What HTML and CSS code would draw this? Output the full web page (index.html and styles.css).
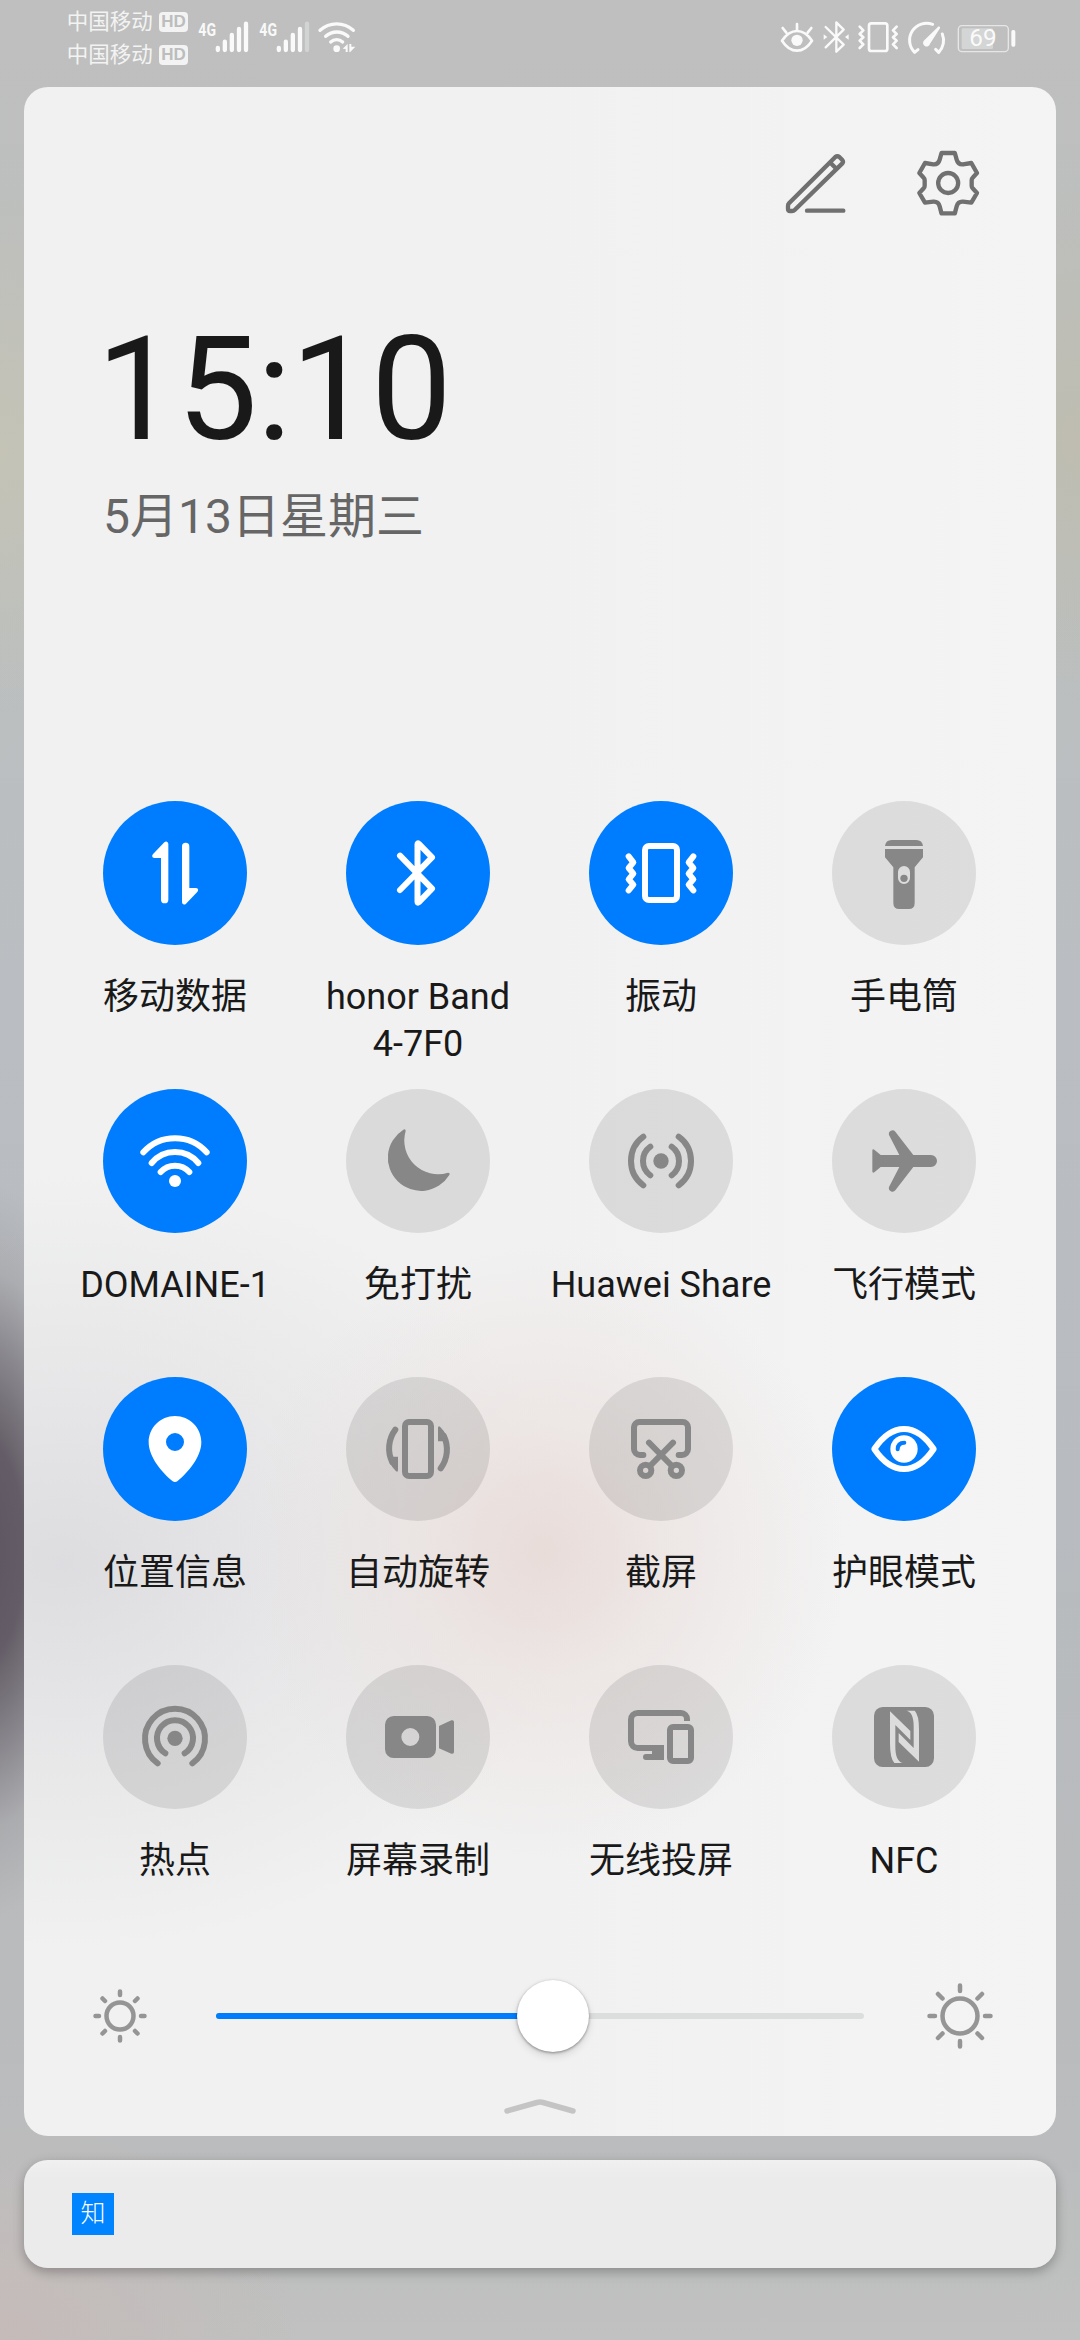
FILE: index.html
```html
<!DOCTYPE html>
<html lang="zh-CN">
<head>
<meta charset="utf-8">
<title>控制中心</title>
<link rel="stylesheet" href="styles.css">
</head>
<body>
<header class="status">
  <div class="carriers">
    <div class="carrier"><span>中国移动</span><b class="hd">HD</b></div>
    <div class="carrier"><span>中国移动</span><b class="hd">HD</b></div>
  </div>
  <svg class="sig" viewBox="435 0 183 261">
    <text class="net" x="445" y="107" textLength="53" lengthAdjust="spacingAndGlyphs">4G</text>
    <g class="bars"><path d="M503.500 144v6M524.500 125v25M545.500 105v45M567 87v63M588 71v79"/></g>
  </svg>
  <svg class="sig" viewBox="618 0 183 261">
    <text class="net" x="628" y="107" textLength="53" lengthAdjust="spacingAndGlyphs">4G</text>
    <g class="bars"><path d="M686.500 144v6M707.500 125v25M728.500 105v45M750 87v63"/><path class="dim" d="M771 71v79"/></g>
  </svg>
  <svg class="wifi" viewBox="801 0 120 261">
    <g class="line w10"><path d="M810 91A74 74 0 0 1 910 91M827 109A50 50 0 0 1 894 109M842 126A27 27 0 0 1 878 126"/></g>
    <circle class="fill" cx="860" cy="146" r="10"/>
    <path class="fill" d="M878 146L893 132V156H887V147ZM898 156V132H904V140H916L900 157Z"/>
  </svg>
  <span class="spacer"></span>
  <svg class="s40" viewBox="55 0 120 261">
    <g class="line w8"><path d="M67 122C80 103 95 93 112 93S144 103 157 122C144 142 129 152 112 152S80 142 67 122Z"/><path d="M112 72V92M69 84L80 98M155 84L144 98"/></g>
    <circle class="fill" cx="112" cy="121" r="17"/>
  </svg>
  <svg class="s36" viewBox="175 0 108 261">
    <path class="line w7" d="M198 81L252 134L230 155V67L252 89L198 142"/>
    <path class="fill" d="M192 103L203 111L192 119ZM267 103L256 111L267 119Z"/>
  </svg>
  <svg class="s49" viewBox="283 0 147 261">
    <g class="line w8"><rect x="328" y="70" width="55" height="83" rx="7"/><path d="M300 80L311 91L300 102L311 112L300 122L311 133L300 144M411 80L400 91L411 102L400 112L411 122L400 133L411 144"/></g>
  </svg>
  <svg class="s47" viewBox="430 0 141 261">
    <path class="line w9" d="M519 73A51 51 0 0 0 465 157L475 149M548 102A51 51 0 0 1 537 157L528 148"/>
    <path class="fill" d="M537 79Q543 80 541 85L511 131A10.500 10.500 0 1 1 494 121Z"/>
  </svg>
  <svg class="s66" viewBox="571 0 198 261">
    <rect class="cell" x="606" y="85" width="94" height="62" rx="4"/>
    <rect class="line w4" x="596" y="77" width="150" height="78" rx="11"/>
    <rect class="fill" x="755" y="90" width="12" height="50" rx="5"/>
    <text class="pct" x="629" y="138">69</text>
  </svg>
</header>

<main class="panel">
  <div class="tools">
    <svg viewBox="72 450 192 198">
      <path d="M226 471Q232 466 238 471L247 480Q251 485 247 490L104 630Q101 633 96 633H90Q84 633 84 627V618Q84 613 87 610ZM211 488L230 507M141 632H250"/>
    </svg>
    <svg viewBox="468 450 192 198">
      <path d="M544.500 459H584.500L590 479Q594 494 609 493L634 489L651 519L638 533Q635 536 635 541V557Q635 562 638 565L651 579L634 608L609 605Q594 604 590 619L584.500 640H544.500L539 619Q535 604 520 605L495 608L478 579L491 565Q494 562 494 557V541Q494 536 491 533L478 519L495 489L520 493Q535 494 539 479Z"/>
      <circle cx="564.500" cy="549" r="30"/>
    </svg>
  </div>
  <div class="time">15:10</div>
  <div class="date">5月13日星期三</div>

  <section class="tiles">
    <div class="tile on"><svg viewBox="0 0 432 432"><g class="solid"><path d="M174 171H154Q148 171 147.500 166Q147 162 151 158L184 124Q188 120 192 122Q196 124 196 129V296a11 11 0 0 1-22 0Z"/><path transform="rotate(180 216.500 216)" d="M174 171H154Q148 171 147.500 166Q147 162 151 158L184 124Q188 120 192 122Q196 124 196 129V296a11 11 0 0 1-22 0Z"/></g></svg><p>移动数据</p></div>
    <div class="tile on"><svg viewBox="0 0 432 432"><path class="stroke" d="M162 164L258 263L218 304Q214.500 307 214.500 302V130Q214.500 125 218 128L258 169L162 267"/></svg><p>honor Band<br>4-7F0</p></div>
    <div class="tile on"><svg viewBox="0 0 432 432"><g class="stroke"><rect x="168" y="135" width="96" height="162" rx="12"/><path d="M119 166L133 184L119 201L133 218L119 235L133 251L119 268M313 166L299 184L313 201L299 218L313 235L299 251L313 268"/></g></svg><p>振动</p></div>
    <div class="tile"><svg viewBox="0 0 432 432"><path class="solid" fill-rule="evenodd" d="M159 135Q161 117 179 117H253Q271 117 273 135ZM159 144H273V169L248 199V306Q248 324 230 324H202Q184 324 184 306V199L159 169ZM216 195a18 18 0 0 0-18 18v18a18 18 0 0 0 36 0v-18a18 18 0 0 0-18-18Z"/><circle class="solid" cx="216" cy="232" r="11"/></svg><p>手电筒</p></div>

    <div class="tile on"><svg viewBox="0 0 432 432"><path class="stroke" d="M121 190A128 128 0 0 1 311 190M146 222A91 91 0 0 1 286 222M173 249A58 58 0 0 1 259 249"/><circle class="solid" cx="216" cy="276" r="18"/></svg><p>DOMAINE-1</p></div>
    <div class="tile"><svg viewBox="0 0 432 432"><path class="solid" d="M172 122Q179 119 179 126A101 101 0 0 0 306 251Q313 251 310 258A99.500 99.500 0 1 1 172 122Z"/></svg><p>免打扰</p></div>
    <div class="tile"><svg viewBox="0 0 432 432"><path class="stroke" d="M184 173A53 53 0 0 0 184 259M163 143A90.500 90.500 0 0 0 163 289M248 173A53 53 0 0 1 248 259M269 143A90.500 90.500 0 0 1 269 289"/><circle class="solid" cx="216" cy="216" r="23"/></svg><p>Huawei Share</p></div>
    <div class="tile"><svg viewBox="0 0 432 432"><path class="solid" d="M146 198H202L171 138A11 11 0 0 1 190 128L244 198H297a18 18 0 0 1 0 36H244L190 304A11 11 0 0 1 171 294L202 234H146L127 250Q121 253 121 247V185Q121 179 127 182Z"/></svg><p>飞行模式</p></div>

    <div class="tile on"><svg viewBox="0 0 432 432"><path class="solid" fill-rule="evenodd" d="M216 117c44 0 79 35 79 79c0 44-40 91-72 117q-7 4-14 0C177 287 137 240 137 196c0-44 35-79 79-79ZM216 168a27 27 0 1 0 0 54a27 27 0 0 0 0-54Z"/></svg><p>位置信息</p></div>
    <div class="tile"><svg viewBox="0 0 432 432"><rect class="stroke" x="177" y="135" width="78" height="162" rx="12"/><path class="stroke" d="M148 158A94 94 0 0 0 139 256M284 274A94 94 0 0 0 293 176"/><path class="solid" d="M134 239H156V279Q156 286 150 283Q138 272 131 256ZM298 193H276V153Q276 146 282 149Q294 160 301 176Z"/></svg><p>自动旋转</p></div>
    <div class="tile"><svg viewBox="0 0 432 432"><g class="stroke"><path d="M163 234H153a18 18 0 0 1-18-18V151a16 16 0 0 1 16-16H281a16 16 0 0 1 16 16V216a18 18 0 0 1-18 18H269M180 197L249 267M252 197L183 267"/><circle cx="170" cy="280" r="17"/><circle cx="262" cy="280" r="17"/></g></svg><p>截屏</p></div>
    <div class="tile on"><svg viewBox="0 0 432 432"><path class="stroke" d="M127 216C150 182 182 156 216 156S282 182 305 216C282 250 250 276 216 276S150 250 127 216Z"/><circle class="solid" cx="216" cy="216" r="41"/><path class="glint" d="M197 217Q197 197 217 197"/></svg><p>护眼模式</p></div>

    <div class="tile"><svg viewBox="0 0 432 432"><path class="stroke" d="M187 265A54 54 0 1 1 245 265M164 295A90 90 0 1 1 268 295"/><circle class="solid" cx="216" cy="220" r="23"/></svg><p>热点</p></div>
    <div class="tile"><svg viewBox="0 0 432 432"><path class="solid" fill-rule="evenodd" d="M143 153H244a26 26 0 0 1 26 26V253a26 26 0 0 1-26 26H143a26 26 0 0 1-26-26V179a26 26 0 0 1 26-26ZM193 189a27 27 0 1 0 0 54a27 27 0 0 0 0-54ZM279 183L316 166Q324 164 324 171V261Q324 268 316 266L279 250Z"/></svg><p>屏幕录制</p></div>
    <div class="tile"><svg viewBox="0 0 432 432"><path class="stroke butt" d="M225 249H146a20 20 0 0 1-20-20V164a20 20 0 0 1 20-20H276a18 18 0 0 1 18 18V168"/><rect class="stroke" x="243" y="186" width="63" height="102" rx="9"/><path class="solid" d="M189 257H225V285H171a9 9 0 0 1 0-18H189Z"/></svg><p>无线投屏</p></div>
    <div class="tile"><svg viewBox="0 0 432 432"><path class="solid" fill-rule="evenodd" d="M152 126H280a26 26 0 0 1 26 26V280a26 26 0 0 1-26 26H152a26 26 0 0 1-26-26V152a26 26 0 0 1 26-26ZM174 139V235Q174 280 187 294H212Q190 288 190 245V180L235 225V198ZM261 290V194Q261 149 248 137H223Q245 141 245 184V249L200 204V231Z"/></svg><p>NFC</p></div>
  </section>

  <div class="brightness">
    <svg class="sun small" viewBox="-27 -27 54 54"><circle r="13.500"/><path d="M0-24.500v3.500M0 24.500v-3.500M-24.500 0h3.500M24.500 0h-3.500M-17.500-17.500l2.500 2.500M17.500 17.500l-2.500-2.500M-17.500 17.500l2.500-2.500M17.500-17.500l-2.500 2.500"/></svg>
    <div class="track"><div class="level"></div><div class="thumb"></div></div>
    <svg class="sun large" viewBox="-33 -33 66 66"><circle r="17.500"/><path d="M0-30.500v5.500M0 30.500v-5.500M-30.500 0h5.500M30.500 0h-5.500M-22-22l4.500 4.500M22 22l-4.500-4.500M-22 22l4.500-4.500M22-22l-4.500 4.500"/></svg>
  </div>
  <svg class="handle" viewBox="0 0 72 18"><path d="M3 13L33 4.500Q36 3.700 39 4.500L69 13"/></svg>
</main>

<section class="notice"><span class="app">知</span></section>
</body>
</html>
```
FILE: styles.css
```css
* { box-sizing: border-box; }
body {
  margin: 0;
  width: 1080px;
  height: 2340px;
  overflow: hidden;
  font-family: Roboto, "Noto Sans CJK SC", sans-serif;
  color: #191919;
  background:
    radial-gradient(ellipse 150px 370px at -20px 1550px, #5c5460 0%, #645d67 30%, rgba(110,105,113,.7) 52%, rgba(140,137,142,.3) 76%, rgba(160,158,163,0) 100%),
    radial-gradient(ellipse 300px 220px at 0 2340px, #c5bbb9, rgba(197,187,185,0)),
    radial-gradient(ellipse 200px 260px at 0 450px, #c4c3b6, rgba(196,195,182,0)),
    radial-gradient(ellipse 200px 260px at 1080px 440px, #bfbdb1, rgba(191,189,177,0)),
    linear-gradient(#bebfbe 0, #bcbfbe 500px, #babec2 1000px, #b8bbbf 1500px, #b9bbbc 2000px, #bbbcbd 2150px, #c0c1c0 2340px);
}
svg { display: block; flex: none; overflow: visible; }
p { margin: 0; }

.status { display: flex; align-items: center; height: 87px; padding: 0 63.67px 0 66.67px; }
.status svg { height: 87px; }
.carriers { display: flex; flex-direction: column; width: 121.330px; margin-right: 7px; height: 65px; margin-top: -11px; justify-content: space-between; }
.carrier { display: flex; align-items: center; justify-content: space-between; height: 32px; color: #f3f3f3; font-size: 21.500px; line-height: 32px; white-space: nowrap; }
.hd { display: flex; align-items: center; justify-content: center; width: 29px; height: 20px; border-radius: 4px; background: #f3f3f3; color: #bcbdbd; font: 700 17px/20px "Liberation Sans", sans-serif; }
.sig { width: 61px; }
.wifi, .s40 { width: 40px; }
.s36 { width: 36px; }
.s49 { width: 49px; }
.s47 { width: 47px; }
.s66 { width: 66px; }
.spacer { flex: 1; }
.net { font: 700 57px Roboto, sans-serif; fill: #f9f9f9; }
.pct { font: 400 73px Roboto, sans-serif; fill: #fafafa; }
.bars { stroke: #fafafa; stroke-width: 13; stroke-linecap: round; }
.dim { stroke: #d2d3d3; }
.line { fill: none; stroke: #fafafa; stroke-linecap: round; stroke-linejoin: round; }
.fill { fill: #fafafa; }
.cell { fill: #d4d5d5; }
.w4 { stroke-width: 4; stroke: #e6e6e6; }
.w7 { stroke-width: 7; }
.w8 { stroke-width: 8; }
.w9 { stroke-width: 9; }
.w10 { stroke-width: 10; }

.panel {
  height: 2049px;
  margin: 0 24px;
  border-radius: 24px;
  overflow: hidden;
  background:
    radial-gradient(ellipse 300px 310px at 520px 1465px, rgba(232,218,215,.9), rgba(234,224,221,.55) 45%, rgba(240,238,237,0)),
    radial-gradient(ellipse 520px 390px at 40px 1475px, rgba(219,218,222,.9), rgba(226,225,228,.6) 50%, rgba(240,240,240,0)),
    linear-gradient(90deg, #f0f1f0, #f1f1f1 50%, #f4f4f4);
}
.tools { display: flex; justify-content: flex-end; gap: 68px; padding: 63px 76px 0 0; }
.tools svg { width: 64px; height: 66px; fill: none; stroke: #707070; stroke-width: 13; stroke-linecap: round; stroke-linejoin: round; }
.time { margin: 102px 0 0 72.500px; font-size: 144px; line-height: 144px; letter-spacing: -.8px; }
.date { margin: 27px 0 0 79px; font-size: 48px; line-height: 56px; color: #666; }

.tiles { display: grid; grid-template-columns: repeat(4, 243px); grid-auto-rows: 288px; margin: 256px 0 0 29.500px; }
.tile { display: flex; flex-direction: column; align-items: center; color: #878787; }
.tile svg { width: 144px; height: 144px; border-radius: 50%; background: rgba(0,0,0,.095); }
.tile.on { color: #fff; }
.tile.on svg { background: #007dff; }
.tile p { margin-top: 28.500px; color: #191919; font-size: 36px; line-height: 47px; text-align: center; white-space: nowrap; }
.solid { fill: currentColor; }
.stroke { fill: none; stroke: currentColor; stroke-width: 18; stroke-linecap: round; stroke-linejoin: round; }
.butt { stroke-linecap: butt; }
.glint { fill: none; stroke: #007dff; stroke-width: 12; stroke-linecap: round; }

.brightness { display: flex; align-items: center; height: 72px; margin: 27px 63px 0 69px; }
.sun { fill: none; stroke: #959595; stroke-width: 4.500; stroke-linecap: round; }
.small { width: 54px; height: 54px; }
.large { width: 66px; height: 66px; }
.track { display: flex; align-items: center; flex: 1; height: 6px; margin: 0 63px 0 69px; border-radius: 3px; background: #dcdddd; }
.level { width: 306px; height: 6px; border-radius: 3px; background: #007dff; }
.thumb { flex: none; width: 72px; height: 72px; margin-left: -5px; border-radius: 50%; background: #fff; box-shadow: 0 1px 3px rgba(0,0,0,.4), 0 4px 9px rgba(0,0,0,.12); }
.handle { width: 72px; height: 18px; margin: 46px auto 0; fill: none; stroke: #c4c4c4; stroke-width: 5.500; stroke-linecap: round; }

.notice { display: flex; align-items: center; height: 108px; margin: 24px 24px 0; padding: 0 48px; border-radius: 24px; background: linear-gradient(#f0f0f0, #ebebeb 18px); box-shadow: 0 4px 12px rgba(0,0,0,.28); }
.app { display: flex; align-items: center; justify-content: center; width: 42px; height: 42px; background: #0084ff; color: #fff; font-size: 25px; line-height: 42px; font-weight: 300; }
```
